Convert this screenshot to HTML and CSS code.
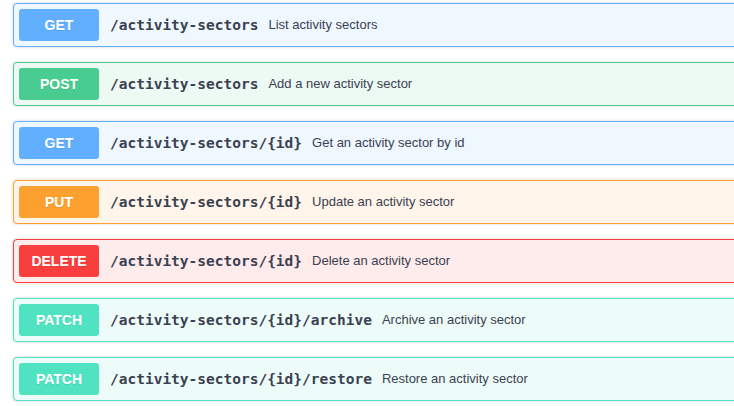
FILE: index.html
```html
<!DOCTYPE html>
<html>
<head>
<meta charset="utf-8">
<link rel="stylesheet" href="styles.css">
</head>
<body>
<div class="frame">
<div class="ops">
  <div class="opblock get">
    <span class="method">GET</span>
    <span class="path">/activity-sectors</span>
    <span class="desc">List activity sectors</span>
  </div>
  <div class="opblock post">
    <span class="method">POST</span>
    <span class="path">/activity-sectors</span>
    <span class="desc">Add a new activity sector</span>
  </div>
  <div class="opblock get">
    <span class="method">GET</span>
    <span class="path">/activity-sectors/{id}</span>
    <span class="desc">Get an activity sector by id</span>
  </div>
  <div class="opblock put">
    <span class="method">PUT</span>
    <span class="path">/activity-sectors/{id}</span>
    <span class="desc">Update an activity sector</span>
  </div>
  <div class="opblock delete">
    <span class="method">DELETE</span>
    <span class="path">/activity-sectors/{id}</span>
    <span class="desc">Delete an activity sector</span>
  </div>
  <div class="opblock patch">
    <span class="method">PATCH</span>
    <span class="path">/activity-sectors/{id}/archive</span>
    <span class="desc">Archive an activity sector</span>
  </div>
  <div class="opblock patch">
    <span class="method">PATCH</span>
    <span class="path">/activity-sectors/{id}/restore</span>
    <span class="desc">Restore an activity sector</span>
  </div>
</div>
</div>
</body>
</html>
```

FILE: styles.css
```css
html, body {
  margin: 0;
  padding: 0;
  background: #fff;
}
body {
  font-family: "Liberation Sans", Arial, sans-serif;
}
.frame {
  width: 734px;
  height: 406px;
  overflow: hidden;
}
.ops {
  padding: 3px 0 0 13px;
  margin-right: -40px;
  display: flex;
  flex-direction: column;
  gap: 15px;
}
.opblock {
  display: flex;
  align-items: center;
  height: 42px;
  padding: 0 5px;
  border: 1px solid;
  border-radius: 4px;
  box-shadow: 0 0 3px rgba(0,0,0,.19);
}
.method {
  flex: none;
  width: 80px;
  height: 32px;
  line-height: 32px;
  text-align: center;
  border-radius: 3px;
  color: #fff;
  font-size: 14px;
  font-weight: 700;
  text-shadow: 0 1px 0 rgba(0,0,0,.1);
}
.path {
  padding: 0 10px 0 11px;
  font-family: "DejaVu Sans Mono", monospace;
  font-weight: 700;
  font-size: 14.5px;
  color: #3b4151;
}
.desc {
  font-size: 13px;
  color: #3b4151;
  margin-top: -1px;
}
.get { background: #eff7ff; border-color: #61affe; }
.get .method { background: #61affe; }
.post { background: #edfaf4; border-color: #49cc90; }
.post .method { background: #49cc90; }
.put { background: #fff5ea; border-color: #fca130; }
.put .method { background: #fca130; }
.delete { background: #feebeb; border-color: #f93e3e; }
.delete .method { background: #f93e3e; }
.patch { background: #edfcf9; border-color: #50e3c2; }
.patch .method { background: #50e3c2; }
```
